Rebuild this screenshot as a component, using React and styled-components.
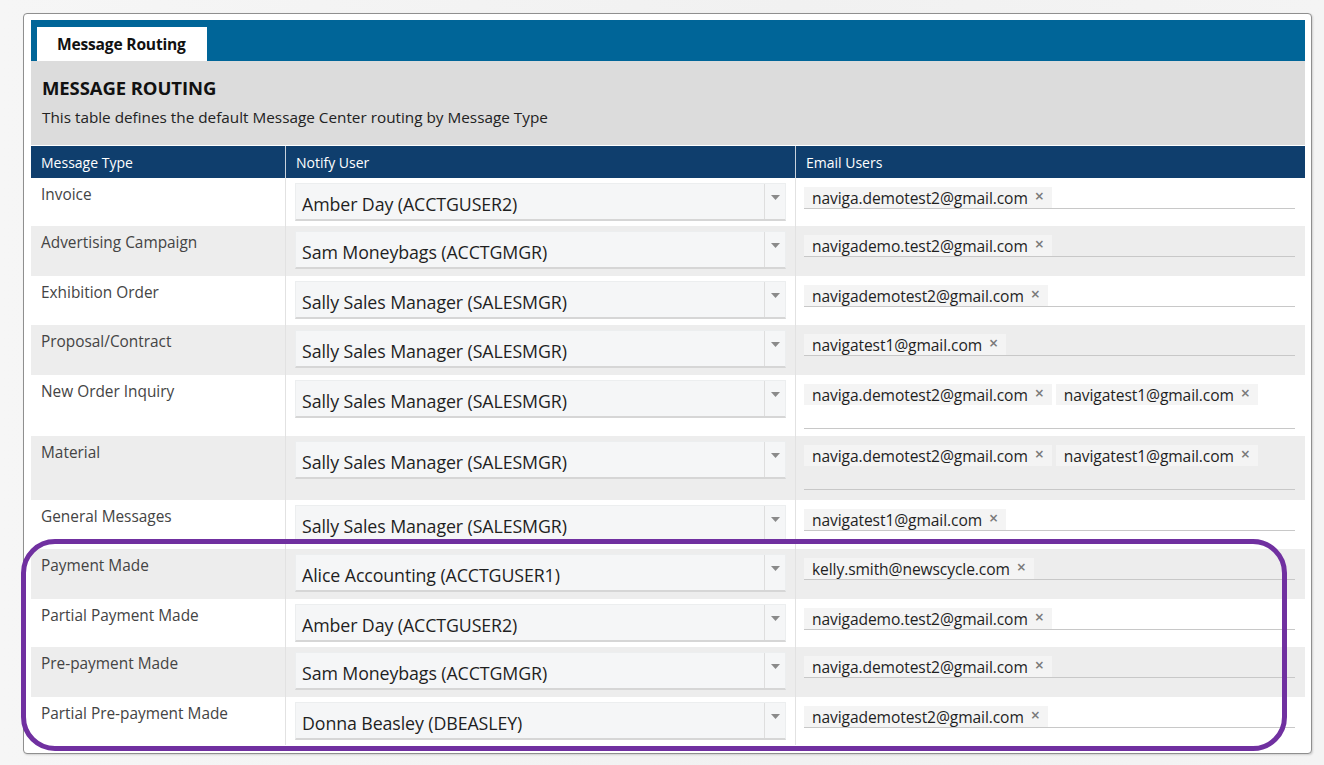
import React from "react";
import styled, { createGlobalStyle } from "styled-components";

const Global = createGlobalStyle`
  html, body { margin: 0; padding: 0; }
  body {
    background: #f3f3f3;
    font-family: "Open Sans", "Noto Sans", "DejaVu Sans", sans-serif;
    color: #333;
  }
`;

const Page = styled.div`
  position: relative;
  width: 1324px;
  height: 765px;
  padding: 13px 0 0 23px;
  box-sizing: border-box;
  background: linear-gradient(90deg, #f6f6f6 0%, #f1f1f1 60%, #f4f4f4 100%);
`;

const Panel = styled.div`
  width: 1289px;
  box-sizing: border-box;
  background: #fff;
  border: 1px solid #8f8f8f;
  border-radius: 4px;
  padding: 6px 6px 8px 7px;
  box-shadow: 1px 1px 2px rgba(0, 0, 0, 0.15);
`;

const TabBar = styled.div`
  display: flex;
  align-items: flex-end;
  height: 41px;
  background: #006598;
  padding-left: 6px;
`;

const Tab = styled.div`
  height: 34px;
  width: 170px;
  box-sizing: border-box;
  background: #fff;
  display: flex;
  align-items: center;
  padding-left: 20px;
  font-weight: 700;
  font-size: 15.6px;
  color: #111;
  letter-spacing: -0.2px;
`;

const Header = styled.div`
  background: #dcdcdc;
  height: 84px;
  padding: 15px 0 0 11px;
  box-sizing: border-box;
`;

const Title = styled.h1`
  margin: 0;
  font-size: 18.5px;
  font-weight: 700;
  color: #111;
  line-height: 24px;
  letter-spacing: -0.1px;
`;

const Subtitle = styled.p`
  margin: 7px 0 0;
  font-size: 15.3px;
  line-height: 20px;
  color: #222;
`;

const Table = styled.div`
  margin-top: 1px;
  display: grid;
  grid-template-columns: 254px 510px 1fr;
`;

const HeadCell = styled.div`
  background: #0f3e6d;
  color: #fff;
  height: 32px;
  display: flex;
  align-items: center;
  padding-left: 10px;
  font-size: 14px;
  border-left: ${(p) => (p.$first ? "none" : "1px solid #c9d2dc")};
`;

const Cell = styled.div`
  background: ${(p) => (p.$alt ? "#ededed" : "#fff")};
  border-left: ${(p) => (p.$first ? "none" : "1px solid #e2e2e2")};
  box-sizing: border-box;
`;

const TypeCell = styled(Cell)`
  padding: 7px 0 0 10px;
  font-size: 15.4px;
  line-height: 20px;
  color: #444;
  height: ${(p) => p.$h}px;
`;

const UserCell = styled(Cell)`
  padding: 5px 9px 0 9px;
`;

const Select = styled.div`
  display: flex;
  height: 38px;
  box-sizing: border-box;
  background: #f5f6f7;
  border: 1px solid #eceeef;
  border-bottom: 2px solid #d6d6d6;
`;

const SelectValue = styled.div`
  flex: 1;
  display: flex;
  align-items: center;
  padding: 4px 0 0 6px;
  font-size: 17.8px;
  color: #1f1f1f;
  letter-spacing: -0.1px;
`;

const Arrow = styled.div`
  width: 21px;
  border-left: 1px solid #dedede;
  display: flex;
  justify-content: center;
  padding-top: 11px;
  box-sizing: border-box;
`;

const EmailCell = styled(Cell)`
  padding: 5px 10px 0 8px;
`;

const EmailField = styled.div`
  border-bottom: 1px solid #c8c8c8;
  padding-top: 4px;
  min-height: ${(p) => (p.$multi ? "44px" : "21px")};
  display: flex;
  flex-wrap: wrap;
  align-content: flex-start;
  gap: 4px;
`;

const Tag = styled.span`
  display: inline-flex;
  align-items: center;
  height: 21px;
  background: #f4f4f4;
  padding: 0 8px 0 8px;
  font-size: 15.6px;
  color: #1f1f1f;
  letter-spacing: -0.1px;
`;

const Remove = styled.span`
  margin-left: 7px;
  font-size: 16px;
  font-weight: 600;
  color: #7a7a7a;
  line-height: 1;
  position: relative;
  top: -2px;
`;

const Highlight = styled.div`
  position: absolute;
  left: 21px;
  top: 539px;
  width: 1266px;
  height: 212px;
  box-sizing: border-box;
  border: 5px solid #7030a0;
  border-radius: 34px;
  pointer-events: none;
`;

const rows = [
  { type: "Invoice", user: "Amber Day (ACCTGUSER2)", emails: ["naviga.demotest2@gmail.com"], h: 48 },
  { type: "Advertising Campaign", user: "Sam Moneybags (ACCTGMGR)", emails: ["navigademo.test2@gmail.com"], h: 50 },
  { type: "Exhibition Order", user: "Sally Sales Manager (SALESMGR)", emails: ["navigademotest2@gmail.com"], h: 49 },
  { type: "Proposal/Contract", user: "Sally Sales Manager (SALESMGR)", emails: ["navigatest1@gmail.com"], h: 50 },
  {
    type: "New Order Inquiry",
    user: "Sally Sales Manager (SALESMGR)",
    emails: ["naviga.demotest2@gmail.com", "navigatest1@gmail.com"],
    multi: true,
    h: 61,
  },
  {
    type: "Material",
    user: "Sally Sales Manager (SALESMGR)",
    emails: ["naviga.demotest2@gmail.com", "navigatest1@gmail.com"],
    multi: true,
    h: 64,
  },
  { type: "General Messages", user: "Sally Sales Manager (SALESMGR)", emails: ["navigatest1@gmail.com"], h: 49 },
  { type: "Payment Made", user: "Alice Accounting (ACCTGUSER1)", emails: ["kelly.smith@newscycle.com"], h: 50 },
  { type: "Partial Payment Made", user: "Amber Day (ACCTGUSER2)", emails: ["navigademo.test2@gmail.com"], h: 48 },
  { type: "Pre-payment Made", user: "Sam Moneybags (ACCTGMGR)", emails: ["naviga.demotest2@gmail.com"], h: 50 },
  { type: "Partial Pre-payment Made", user: "Donna Beasley (DBEASLEY)", emails: ["navigademotest2@gmail.com"], h: 48 },
];

const Caret = () => (
  <svg width="9" height="5" viewBox="0 0 9 5">
    <path d="M0 0 L9 0 L4.5 5 Z" fill="#8a8a8a" />
  </svg>
);

export default function App() {
  return (
    <>
      <Global />
      <Page>
        <Panel>
          <TabBar>
            <Tab>Message Routing</Tab>
          </TabBar>
          <Header>
            <Title>MESSAGE ROUTING</Title>
            <Subtitle>This table defines the default Message Center routing by Message Type</Subtitle>
          </Header>
          <Table>
            <HeadCell $first>Message Type</HeadCell>
            <HeadCell>Notify User</HeadCell>
            <HeadCell>Email Users</HeadCell>
            {rows.map((r, i) => {
              const alt = i % 2 === 1;
              return (
                <React.Fragment key={r.type}>
                  <TypeCell $first $alt={alt} $h={r.h}>
                    {r.type}
                  </TypeCell>
                  <UserCell $alt={alt}>
                    <Select>
                      <SelectValue>{r.user}</SelectValue>
                      <Arrow>
                        <Caret />
                      </Arrow>
                    </Select>
                  </UserCell>
                  <EmailCell $alt={alt}>
                    <EmailField $multi={r.multi}>
                      {r.emails.map((e) => (
                        <Tag key={e}>
                          {e}
                          <Remove>×</Remove>
                        </Tag>
                      ))}
                    </EmailField>
                  </EmailCell>
                </React.Fragment>
              );
            })}
          </Table>
        </Panel>
        <Highlight />
      </Page>
    </>
  );
}
